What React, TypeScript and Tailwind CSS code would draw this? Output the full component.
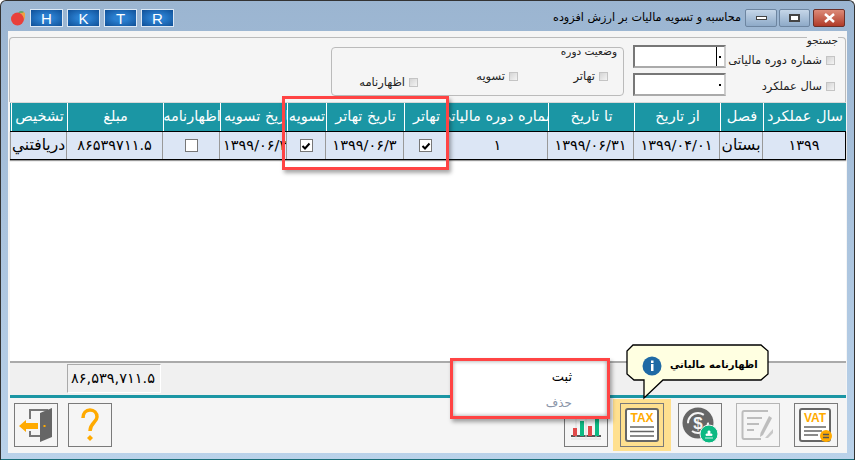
const fa = "font-['DejaVu_Sans',sans-serif]";

const columns = [
  { title: "سال عملکرد", width: "w-[83px]", value: "۱۳۹۹", digits: true },
  { title: "فصل", width: "w-[43px]", value: "بستان" },
  { title: "از تاریخ", width: "w-[86px]", value: "۱۳۹۹/۰۴/۰۱", digits: true },
  { title: "تا تاریخ", width: "w-[86px]", value: "۱۳۹۹/۰۶/۳۱", digits: true },
  { title: "شماره دوره مالیاتي", width: "w-[100px]", value: "۱", digits: true },
  { title: "تهاتر", width: "w-[44px]", check: true },
  { title: "تاریخ تهاتر", width: "w-[78px]", value: "۱۳۹۹/۰۶/۳", digits: true },
  { title: "تسویه", width: "w-[39px]", check: true },
  { title: "تاریخ تسویه", width: "w-[67px]", value: "۱۳۹۹/۰۶/۳", digits: true, clipEnd: true },
  { title: "اظهارنامه", width: "w-[57px]", check: false },
  { title: "مبلغ", width: "w-[96px]", value: "۸۶۵۳۹۷۱۱.۵", digits: true },
  { title: "تشخیص", width: "w-[56px]", value: "دریافتني" },
];

function FilterCheck({ label }: { label: string }) {
  return (
    <div className="flex items-center gap-[4px]">
      <span className="h-[9px] w-[9px] flex-none border border-[#c4c4c4] bg-gradient-to-br from-[#d4d4d4] to-[#f4f4f4]" />
      <span className="whitespace-nowrap text-[11.5px] leading-[14px] text-[#222]">{label}</span>
    </div>
  );
}

function GridCheck({ on }: { on: boolean }) {
  return (
    <span className="flex h-[13px] w-[13px] items-center justify-center border border-[#777] bg-white">
      {on && (
        <svg width="10" height="10" viewBox="0 0 10 10">
          <path d="M1.5 5 L4 7.5 L8.5 2.5" fill="none" stroke="#000" strokeWidth="2" />
        </svg>
      )}
    </span>
  );
}

function TitleButton({ letter }: { letter: string }) {
  return (
    <div className="flex h-[18px] w-[33px] items-center justify-center border border-[#dce8f5] bg-[radial-gradient(ellipse_at_center,#2a7fd0_30%,#0f4f96_100%)] font-['Liberation_Sans',sans-serif] text-[15px] leading-none text-white">
      {letter}
    </div>
  );
}

function ToolButton({ children, muted, active }: { children: React.ReactNode; muted?: boolean; active?: boolean }) {
  return (
    <div className={`flex h-[52px] w-[58px] items-center justify-center ${active ? "bg-[#ffe08f]" : ""}`}>
      <div className={`flex h-[44px] w-[44px] items-center justify-center border ${muted ? "border-[#b5b5b5]" : "border-[#7a7a7a]"}`}>
        {children}
      </div>
    </div>
  );
}

function VatIcon() {
  return (
    <svg width="36" height="36" viewBox="0 0 36 36">
      <rect x="2" y="2" width="30" height="32" rx="2" fill="#fff" stroke="#666" strokeWidth="2" />
      <text x="17" y="15" textAnchor="middle" fontSize="12" fontWeight="700" fill="#ffaa00" fontFamily="Liberation Sans">VAT</text>
      <path d="M6 20H28M6 24H24M6 28H20" stroke="#666" strokeWidth="1.6" />
      <circle cx="28" cy="29" r="6" fill="#ffaa00" />
      <path d="M25 27.5H31M25 30.5H31" stroke="#555" strokeWidth="1.5" />
    </svg>
  );
}

function TaxIcon() {
  return (
    <svg width="36" height="36" viewBox="0 0 36 36">
      <rect x="2" y="2" width="32" height="32" rx="2" fill="#fff" stroke="#666" strokeWidth="2" />
      <text x="18" y="15" textAnchor="middle" fontSize="12" fontWeight="700" fill="#ffaa00" fontFamily="Liberation Sans">TAX</text>
      <path d="M6 20H30M6 24.5H30M6 29H30" stroke="#666" strokeWidth="1.6" />
    </svg>
  );
}

function MoneyIcon() {
  return (
    <svg width="38" height="38" viewBox="0 0 38 38">
      <circle cx="17" cy="17" r="15.500" fill="#666" />
      <circle cx="17" cy="17" r="10" fill="none" stroke="#f5f5f5" strokeWidth="2" strokeDasharray="22 9" />
      <text x="17" y="23" textAnchor="middle" fontSize="17" fontWeight="700" fill="#f5f5f5" fontFamily="Liberation Sans">$</text>
      <circle cx="28" cy="28" r="9" fill="#0cb982" stroke="#f5f5f5" strokeWidth="1" />
      <path d="M24 32H32M25 29.5H31V28H29V25H27V28H25Z" fill="#fff" stroke="#fff" strokeWidth="0.8" />
    </svg>
  );
}

function EditIcon() {
  return (
    <svg width="34" height="32" viewBox="0 0 34 32">
      <path d="M27 2H3Q1.500 2 1.500 4V28Q1.500 30 3 30H20" fill="none" stroke="#bdbdbd" strokeWidth="2" />
      <path d="M6 9H21M6 15H18M6 21H13" stroke="#bdbdbd" strokeWidth="2" />
      <path d="M28 7 L31 9 L22 26 L19 28 L19.500 24Z" fill="#bdbdbd" />
      <path d="M32 20V24L27 29H24Z" fill="#c8c8c8" />
    </svg>
  );
}

function ChartIcon() {
  return (
    <svg width="36" height="34" viewBox="0 0 36 34">
      <path d="M3 28H33" stroke="#555" strokeWidth="2" />
      <path d="M3 31H33M8 4V30M18 4V30M28 4V30" stroke="#ddd" strokeWidth="1" />
      <rect x="5" y="20" width="4" height="8" fill="#e04848" />
      <rect x="12" y="13" width="4" height="15" fill="#0cb982" />
      <rect x="20" y="18" width="4" height="10" fill="#e04848" />
      <rect x="27" y="8" width="4" height="20" fill="#0cb982" />
    </svg>
  );
}

function HelpIcon() {
  return (
    <svg width="20" height="36" viewBox="0 0 20 36">
      <path d="M3 11C3 6 6 3 10 3C14 3 17 6 17 10C17 15 10 16 10 24" fill="none" stroke="#ffaa00" strokeWidth="3.500" />
      <path d="M10 28L13 31L10 34L7 31Z" fill="#ffaa00" />
    </svg>
  );
}

function ExitIcon() {
  return (
    <svg width="36" height="36" viewBox="0 0 36 36">
      <path d="M12 12V3H30M12 24V29H22" fill="none" stroke="#777" strokeWidth="2" />
      <path d="M22 6L34 1V30L22 35Z" fill="#666" />
      <rect x="25.500" y="18" width="2" height="2" fill="#ffaa00" />
      <path d="M1 19L8 13V16H20V22H8V25Z" fill="#ffaa00" />
    </svg>
  );
}

function AppleIcon() {
  return (
    <svg width="16" height="16" viewBox="0 0 16 16">
      <circle cx="7.500" cy="9" r="6.500" fill="#e8403a" />
      <path d="M10 3C12 1.500 14 2 15 3C15 6 15 9 14 10C14 7 12 4 10 3Z" fill="#f0a040" />
      <path d="M8 2.500C10 0.500 13 1 14 2C12 3 10 3 8 2.500Z" fill="#5aa050" />
    </svg>
  );
}

export default function App() {
  return (
    <div className={`${fa} relative flex h-[460px] w-[855px] flex-col overflow-hidden rounded-t-[6px] border-x border-t border-[#333] bg-gradient-to-b from-[#9bb5d1] to-[#bad2ea]`}>
      {/* title bar */}
      <div className="flex h-[30px] flex-none items-start justify-between pl-[9px] pr-[9px] pt-[8px]">
        <div className="flex items-center gap-[4px]">
          <AppleIcon />
          <TitleButton letter="H" />
          <TitleButton letter="K" />
          <TitleButton letter="T" />
          <TitleButton letter="R" />
        </div>
        <div className="flex items-center">
          <span dir="rtl" className="mr-[4px] whitespace-nowrap text-[11.2px] text-black">محاسبه و تسویه مالیات بر ارزش افزوده</span>
          <div className="flex h-[18px] w-[32px] items-center justify-center rounded-[2px] border border-[#6d85a0] bg-gradient-to-b from-[#c5d6e8] to-[#8eaac8]">
            <span className="h-[4px] w-[11px] border border-[#444] bg-white" />
          </div>
          <div className="ml-[2px] flex h-[18px] w-[31px] items-center justify-center rounded-[2px] border border-[#6d85a0] bg-gradient-to-b from-[#c5d6e8] to-[#8eaac8]">
            <span className="h-[8px] w-[11px] border-2 border-[#444] bg-white" />
          </div>
          <div className="ml-[3px] flex h-[18px] w-[32px] items-center justify-center rounded-[2px] border border-[#6b3028] bg-gradient-to-b from-[#dc8a78] to-[#b03a28]">
            <svg width="13" height="10" viewBox="0 0 13 10">
              <path d="M2 1L11 9M11 1L2 9" stroke="#fff" strokeWidth="2.500" />
            </svg>
          </div>
        </div>
      </div>

      {/* client area */}
      <div dir="rtl" className="mx-[7px] mb-[7px] flex min-h-0 flex-1 flex-col bg-[#f5f5f5]">
        {/* search group */}
        <div className="relative mx-[1px] mt-[6px] flex h-[65px] flex-none gap-[8px] rounded-t-[4px] border border-b-0 border-[#bbb] pr-[10px] pt-[7px]">
          <span className="absolute right-[7px] top-[-4px] bg-[#f5f5f5] text-[10.500px] leading-[12px] text-[#222]">جستجو</span>
          <div className="flex w-[102px] flex-none flex-col gap-[12px] pt-[8px]">
            <FilterCheck label="شماره دوره مالیاتی" />
            <FilterCheck label="سال عملکرد" />
          </div>
          <div className="mr-[-1px] flex flex-col gap-[5px]">
            {[0, 1].map((i) => (
              <div key={i} className="flex h-[23px] w-[93px] items-center border-2 border-b-[#aaa] border-l-[#777] border-r-[#ccc] border-t-[#777] bg-white pr-[3px]">
                <span className="h-[2px] w-[2px] bg-black" />
                {i === 0 && <span className="mr-[2px] h-[19px] w-px bg-black" />}
              </div>
            ))}
          </div>
          <div className="relative mr-[1px] mt-[2px] flex h-[49px] w-[293px] rounded-[4px] border border-[#bbb] pr-[15px] pt-[21px]">
            <span className="absolute right-[6px] top-[-3px] text-[10.500px] leading-[12px] text-[#222]">وضعیت دوره</span>
            <div className="w-[90px]"><FilterCheck label="تهاتر" /></div>
            <div className="w-[100px]"><FilterCheck label="تسویه" /></div>
            <FilterCheck label="اظهارنامه" />
          </div>
        </div>

        {/* data grid */}
        <div className="ml-[2px] mr-[1px] flex min-h-0 flex-1 flex-col bg-white">
          <div className="flex h-[29px] flex-none border-t border-[#d8d8d8] bg-[#1b96a4]">
            {columns.map((c) => (
              <div key={c.title} className={`${c.width} flex flex-none items-center overflow-hidden whitespace-nowrap border-l border-white text-[14.5px] text-white ${c.clipEnd ? "justify-end pl-[3px]" : "justify-center"}`}>
                {c.title}
              </div>
            ))}
          </div>
          <div className="flex h-[29px] flex-none border border-black bg-[#dce6f5] shadow-[0_1px_1px_#999]">
            {columns.map((c) => (
              <div
                key={c.title}
                dir={c.clipEnd ? "ltr" : "rtl"}
                className={`${c.width} flex flex-none items-center overflow-hidden whitespace-nowrap border-l border-[#999] text-black ${c.clipEnd ? "justify-start pl-[3px]" : "justify-center"} ${c.digits ? "text-[14.5px] tracking-[1px]" : "text-[15.5px]"}`}
              >
                {c.value ? c.value : <GridCheck on={!!c.check} />}
              </div>
            ))}
          </div>
          <div className="flex-1" />
        </div>

        {/* totals */}
        <div className="ml-[2px] mr-[1px] flex h-[34px] flex-none justify-end border-t-2 border-[#aaa] bg-[#f0f0f0] pl-[57px] pt-[1px]">
          <div dir="ltr" className="flex h-[29px] w-[94px] items-center overflow-hidden whitespace-nowrap border border-b-white border-l-[#aaa] border-r-white border-t-[#aaa] pl-[3px] text-[14.5px] tracking-[1px] text-black">
            ۸۶,۵۳۹,۷۱۱.۵
          </div>
        </div>
        <div className="ml-[2px] mr-[1px] h-[3px] flex-none bg-[#1b96a4]" />

        {/* toolbar */}
        <div className="flex h-[55px] flex-none items-start justify-between pl-0 pr-[2px] pt-px">
          <div className="flex">
            <ToolButton><VatIcon /></ToolButton>
            <ToolButton muted><EditIcon /></ToolButton>
            <ToolButton><MoneyIcon /></ToolButton>
            <ToolButton active><TaxIcon /></ToolButton>
            <div className="-mr-[2px]"><ToolButton><ChartIcon /></ToolButton></div>
          </div>
          <div className="-ml-[1px] flex">
            <ToolButton><HelpIcon /></ToolButton>
            <div className="-mr-[4px]"><ToolButton><ExitIcon /></ToolButton></div>
          </div>
        </div>
      </div>
      <div className="absolute inset-x-0 bottom-0 h-px bg-[#1b6f7a]" />

      {/* annotation around the settlement columns */}
      <div className="absolute left-[281px] top-[95px] h-[74px] w-[167px] border-[3px] border-[#ff4444] shadow-[2px_3px_4px_rgba(0,0,0,0.35)]" />

      {/* popup menu */}
      <div dir="rtl" className="absolute left-[449px] top-[357px] flex h-[61px] w-[160px] flex-col border-[3px] border-[#ff4444] bg-white pr-[35px] text-[13px] shadow-[2px_3px_4px_rgba(0,0,0,0.35),inset_0_0_4px_rgba(0,0,0,0.4)]">
        <span className="mt-[6px] leading-[20px] text-black">ثبت</span>
        <span className="mt-[6px] text-[12px] leading-[20px] text-[#8a94a8]">حذف</span>
      </div>

      {/* tooltip */}
      <div className="absolute left-[625px] top-[343px] h-[56px] w-[144px]">
        <svg className="absolute inset-0" width="144" height="56" viewBox="0 0 144 56">
          <path d="M7 1H135L142 7V30L135 36H37L18 54V36H8L1 30V7Z" fill="#ffffe1" stroke="#000" strokeWidth="1.300" />
          <circle cx="26" cy="22" r="9.500" fill="#1f6aa5" />
          <rect x="25" y="20" width="2.500" height="7" fill="#fff" />
          <rect x="25" y="16.500" width="2.500" height="2.500" fill="#fff" />
        </svg>
        <span dir="rtl" className="absolute left-[44px] top-[14px] whitespace-nowrap text-[10px] font-bold leading-[14px] text-black">اظهارنامه مالیاتي</span>
      </div>
    </div>
  );
}
